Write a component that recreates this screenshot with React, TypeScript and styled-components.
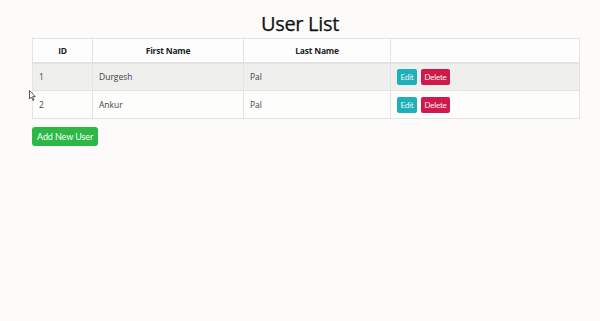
import React from 'react';
import styled, { createGlobalStyle } from 'styled-components';

const GlobalStyle = createGlobalStyle`
  body {
    margin: 0;
    background: #fcfbfa;
    font-family: "Open Sans", "Noto Sans", sans-serif;
  }
`

const Page = styled.div`
  position: relative;
  width: 600px;
  height: 321px;
  padding-top: 12px;
  box-sizing: border-box;
`

const Title = styled.h1`
  margin: 0 0 3px;
  text-align: center;
  font-size: 20px;
  line-height: 23px;
  font-weight: 500;
  letter-spacing: -0.3px;
  color: #111114;
  -webkit-text-stroke: 0.25px #111114;
`

const Table = styled.table`
  margin-left: 32px;
  width: 547px;
  border-collapse: collapse;
  table-layout: fixed;
  font-size: 8.5px;
  color: #333;
`

const Th = styled.th<{ $w: number }>`
  width: ${p => p.$w}px;
  height: 24px;
  padding: 0 6px;
  border: 1px solid #e4e4e4;
  border-bottom: 2px solid #e2e2e2;
  background: #fdfdfd;
  font-weight: 700;
  letter-spacing: -0.2px;
  color: #222;
  text-align: center;
  box-sizing: border-box;
`

const Row = styled.tr<{ $shade?: boolean }>`
  background: ${p => (p.$shade ? '#efefee' : '#fdfdfc')};
`

const Td = styled.td`
  height: 28px;
  padding: 0 6px;
  border: 1px solid #e4e4e4;
  box-sizing: border-box;
  color: #444;
`

const ActionButton = styled.button<{ $color: string }>`
  background: ${p => p.$color};
  color: #f4f4f4;
  border: none;
  border-radius: 2px;
  font-family: Lato, "Liberation Sans", sans-serif;
  font-size: 8px;
  letter-spacing: -0.2px;
  height: 16px;
  padding: 0 3.5px;
  margin-right: 4px;
  cursor: pointer;
`

const AddButton = styled.button`
  margin: 8px 0 0 32px;
  background: #2bb845;
  color: #fff;
  border: none;
  border-radius: 3px;
  font-family: Lato, "Open Sans", sans-serif;
  font-size: 9px;
  letter-spacing: -0.1px;
  height: 19px;
  padding: 0 5px;
`

const Cursor = styled.svg`
  position: absolute;
  left: 29px;
  top: 90px;
`

const users = [
  { id: 1, first: 'Durgesh', last: 'Pal' },
  { id: 2, first: 'Ankur', last: 'Pal' },
]

export default function App() {
  return (
    <Page>
      <GlobalStyle />
      <Title>User List</Title>
      <Table>
        <thead>
          <tr>
            <Th $w={60}>ID</Th>
            <Th $w={151}>First Name</Th>
            <Th $w={147}>Last Name</Th>
            <Th $w={189}></Th>
          </tr>
        </thead>
        <tbody>
          {users.map((u, i) => (
            <Row key={u.id} $shade={i === 0}>
              <Td>{u.id}</Td>
              <Td>{u.first}</Td>
              <Td>{u.last}</Td>
              <Td>
                <ActionButton $color="#1eb0ba">Edit</ActionButton>
                <ActionButton $color="#d0184a">Delete</ActionButton>
              </Td>
            </Row>
          ))}
        </tbody>
      </Table>
      <AddButton>Add New User</AddButton>
      <Cursor width="7" height="11" viewBox="0 0 7 11">
        <path d="M0.5 0.5 L0.5 9 L2.5 7 L4 10.5 L5 10 L3.6 6.6 L6.3 6.6 Z" fill="#fff" stroke="#333" strokeWidth="0.8" />
      </Cursor>
    </Page>
  );
}
